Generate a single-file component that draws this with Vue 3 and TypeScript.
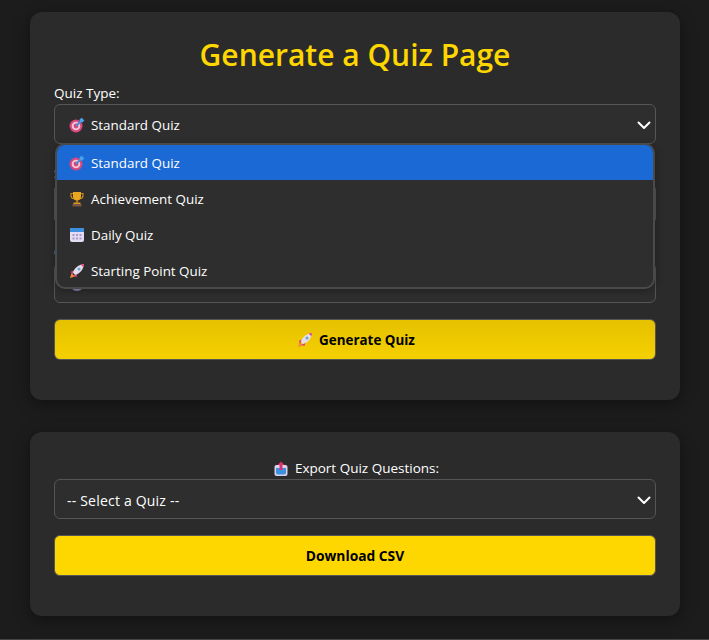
<script setup lang="ts">
import { ref } from 'vue'

const quizTypes = [
  { icon: 'target', label: 'Standard Quiz' },
  { icon: 'trophy', label: 'Achievement Quiz' },
  { icon: 'calendar', label: 'Daily Quiz' },
  { icon: 'rocket', label: 'Starting Point Quiz' },
]

const selected = ref(0)
</script>

<template>
  <div class="page">
    <section class="card quiz-card">
      <h1 class="title">Generate a Quiz Page</h1>

      <div class="field field-type">
        <label class="label">Quiz Type:</label>
        <div class="select">
          <svg class="emoji" viewBox="0 0 16 16" aria-hidden="true">
            <circle cx="7" cy="9" r="6.5" fill="#d9487d" />
            <circle cx="7" cy="9" r="4.3" fill="#f5c6d8" />
            <circle cx="7" cy="9" r="2.4" fill="#d9487d" />
            <path d="M7 9l6-6" stroke="#3f8fd8" stroke-width="1.8" />
            <path d="M10.500 2.500L13 .5l.8 1.700 1.700.8-2 2.500-2.500-.5z" fill="#4aa3e8" />
          </svg>
          <span>Standard Quiz</span>
          <svg class="chevron" viewBox="0 0 14 9" aria-hidden="true"><path d="M1.500 1.500L7 7l5.500-5.500" /></svg>
        </div>

        <ul class="menu">
          <li
            v-for="(item, i) in quizTypes"
            :key="item.label"
            class="menu-item"
            :class="{ active: i === selected }"
          >
            <svg v-if="item.icon === 'target'" class="emoji" viewBox="0 0 16 16" aria-hidden="true">
              <circle cx="7" cy="9" r="6.500" fill="#d9487d" />
              <circle cx="7" cy="9" r="4.300" fill="#f5c6d8" />
              <circle cx="7" cy="9" r="2.400" fill="#d9487d" />
              <path d="M7 9l6-6" stroke="#3f8fd8" stroke-width="1.800" />
              <path d="M10.500 2.500L13 .5l.8 1.700 1.700.8-2 2.500-2.500-.5z" fill="#4aa3e8" />
            </svg>
            <svg v-else-if="item.icon === 'trophy'" class="emoji" viewBox="0 0 16 16" aria-hidden="true">
              <path d="M2 2.500h12v2.200c0 1.600-1.200 2.800-3 3H5c-1.800-.2-3-1.400-3-3z" fill="none" stroke="#c98a1b" stroke-width="1.200" />
              <path d="M4 1h8v4.500c0 2.400-1.600 4-4 4s-4-1.600-4-4z" fill="#eaa61f" />
              <path d="M7 9h2v2.500H7z" fill="#b9781a" />
              <path d="M4.500 11.500h7V13h-7z" fill="#d99a22" />
              <path d="M3.500 13h9v2.500h-9z" fill="#7a5546" />
            </svg>
            <svg v-else-if="item.icon === 'calendar'" class="emoji" viewBox="0 0 16 16" aria-hidden="true">
              <rect x="1" y="1" width="14" height="14" rx="2" fill="#e4dcf2" />
              <path d="M1 5V3a2 2 0 0 1 2-2h10a2 2 0 0 1 2 2v2z" fill="#3d8fe0" />
              <path d="M3.500 7h2v2h-2zM7 7h2v2H7zM10.500 7h2v2h-2zM3.500 10.500h2v2h-2zM7 10.500h2v2H7zM10.500 10.500h2v2h-2z" fill="#a79ac8" />
            </svg>
            <svg v-else class="emoji" viewBox="0 0 16 16" aria-hidden="true">
              <path d="M1 15l1.500-5 3.500 3.500z" fill="#f08a3c" />
              <path d="M2 8.500l3.500-1-2.500 4.500zM7.500 14l1-3.500-4.500 2.500z" fill="#e0457b" />
              <path d="M4 9.500C5.500 5 9.500 1.500 15 1c-.5 5.500-4 9.500-9 11z" fill="#e2deec" />
              <path d="M11.500 1.500L15 1c-.1 1.200-.3 2.300-.6 3.300z" fill="#e0457b" />
              <circle cx="10" cy="6" r="1.500" fill="#6f9fd8" />
            </svg>
            <span>{{ item.label }}</span>
          </li>
        </ul>
      </div>

      <div class="field field-category">
        <label class="label">Select Category:</label>
        <div class="select"><span>All</span></div>
      </div>

      <div class="field field-difficulty">
        <label class="label">Choose Difficulty:</label>
        <div class="select">
          <svg class="emoji" viewBox="0 0 16 16" aria-hidden="true"><circle cx="8" cy="8" r="7" fill="#8f84b8" /></svg>
          <span>Mixed</span>
        </div>
      </div>

      <button class="btn btn-generate" type="button">
        <svg class="emoji" viewBox="0 0 16 16" aria-hidden="true">
          <path d="M1 15l1.500-5 3.500 3.500z" fill="#f08a3c" />
          <path d="M2 8.500l3.500-1-2.500 4.500zM7.500 14l1-3.500-4.500 2.500z" fill="#e0457b" />
          <path d="M4 9.500C5.500 5 9.500 1.500 15 1c-.5 5.500-4 9.500-9 11z" fill="#e2deec" />
          <path d="M11.500 1.500L15 1c-.1 1.200-.3 2.300-.6 3.300z" fill="#e0457b" />
          <circle cx="10" cy="6" r="1.500" fill="#6f9fd8" />
        </svg>
        <span>Generate Quiz</span>
      </button>
    </section>

    <section class="card export-card">
      <label class="label export-label">
        <svg class="emoji" viewBox="0 0 16 16" aria-hidden="true">
          <rect x="1.500" y="4" width="13" height="11" rx="2" fill="#d8d2ea" />
          <path d="M3 7h10v4.500a2 2 0 0 1-2 2H5a2 2 0 0 1-2-2z" fill="#3d8fe0" />
          <path d="M8 .5L11.500 4H9.500v5h-3V4H4.500z" fill="#d9336b" />
        </svg>
        <span>Export Quiz Questions:</span>
      </label>
      <div class="select">
        <span class="placeholder">-- Select a Quiz --</span>
        <svg class="chevron" viewBox="0 0 14 9" aria-hidden="true"><path d="M1.500 1.500L7 7l5.500-5.500" /></svg>
      </div>
      <button class="btn btn-download" type="button">Download CSV</button>
    </section>
  </div>
</template>

<style scoped>
.page {
  min-height: 640px;
  box-sizing: border-box;
  padding: 12px 29px 23px 30px;
  display: flex;
  flex-direction: column;
  gap: 32px;
  background: #1c1c1c;
  border-bottom: 1px solid #444;
  font-family: "Open Sans", "Noto Sans", "Liberation Sans", sans-serif;
  color: #fff;
}

.card {
  background: #2b2b2b;
  border-radius: 12px;
  padding: 22px 24px 24px;
  box-shadow: 0 4px 16px rgba(0, 0, 0, 0.4);
}

.quiz-card {
  height: 388px;
  box-sizing: border-box;
}

.export-card {
  height: 184px;
  box-sizing: border-box;
  padding-top: 27px;
}

.title {
  margin: 0 0 8px;
  text-align: center;
  color: #ffd700;
  font-size: 30px;
  line-height: 42px;
  font-weight: 600;
}

.field {
  position: relative;
}

.field-type {
  margin-bottom: 20px;
}

.field-category {
  margin-bottom: 19px;
}

.field-difficulty {
  margin-bottom: 16px;
}

.label {
  display: block;
  font-size: 13.5px;
  line-height: 19px;
  margin-bottom: 1px;
}

.select {
  height: 40px;
  box-sizing: border-box;
  display: flex;
  align-items: center;
  gap: 6px;
  padding: 2px 12px 0;
  background: #2e2e2e;
  border: 1px solid #555;
  border-radius: 6px;
  font-size: 13.4px;
}

.placeholder {
  font-size: 14px;
  letter-spacing: 0.2px;
}

.chevron {
  width: 14px;
  height: 9px;
  margin-left: auto;
  margin-right: -8px;
  fill: none;
  stroke: #fff;
  stroke-width: 2;
  stroke-linecap: round;
  stroke-linejoin: round;
}

.emoji {
  width: 16px;
  height: 16px;
  margin-left: 2px;
  flex-shrink: 0;
}

.menu {
  position: absolute;
  z-index: 2;
  top: 59px;
  left: 1px;
  right: 1px;
  height: 146px;
  box-sizing: border-box;
  margin: 0;
  padding: 0;
  list-style: none;
  background: #2e2e2e;
  border: 2px solid #4a4a4a;
  border-radius: 10px;
  overflow: hidden;
  box-shadow: 0 2px 8px rgba(0, 0, 0, 0.3);
}

.menu-item {
  height: 36px;
  display: flex;
  align-items: center;
  gap: 6px;
  padding: 0 10px;
  font-size: 13.4px;
}

.menu-item.active {
  height: 35px;
  margin-bottom: 1px;
  background: #1a69d5;
}

.btn {
  width: 100%;
  height: 41px;
  display: flex;
  align-items: center;
  justify-content: center;
  gap: 6px;
  border: 1px solid #555;
  border-radius: 6px;
  color: #000;
  font-family: inherit;
  font-size: 13.4px;
  font-weight: 700;
}

.btn-generate {
  background: linear-gradient(180deg, #e5c100, #f5d000);
}

.btn-download {
  margin-top: 16px;
  font-size: 13.8px;
  background: #ffd700;
}

.export-label {
  display: flex;
  align-items: center;
  justify-content: center;
  gap: 6px;
}
</style>

<style>
html,
body {
  background: #1c1c1c;
}
</style>
